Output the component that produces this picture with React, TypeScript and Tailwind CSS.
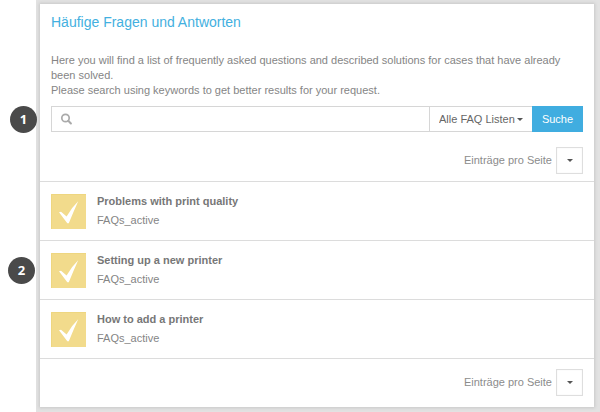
import React from 'react';

interface FaqEntry {
  title: string;
  list: string;
  marker?: string;
}

const entries: FaqEntry[] = [
  { title: 'Problems with print quality', list: 'FAQs_active' },
  { title: 'Setting up a new printer', list: 'FAQs_active', marker: '2' },
  { title: 'How to add a printer', list: 'FAQs_active' },
];

const Caret: React.FC<{ className?: string }> = ({ className }) => (
  <svg viewBox="0 0 6 3" className={`pointer-events-none h-[3px] w-[6px] ${className ?? ''}`} aria-hidden="true">
    <path d="M0 0h6L3 3z" fill="#555" />
  </svg>
);

const Marker: React.FC<{ label: string; className: string }> = ({ label, className }) => (
  <span
    className={`absolute flex size-[27px] items-center justify-center rounded-full bg-[#4a4a4a] font-['Open_Sans',sans-serif] text-[13px] font-bold text-white ${className}`}
  >
    {label}
  </span>
);

const PageSize: React.FC<{ id: string }> = ({ id }) => (
  <div className="flex items-center justify-end gap-1 px-[11px]">
    <label htmlFor={id} className="text-[#8c8c8c]">Einträge pro Seite</label>
    <div className="relative flex items-center justify-center">
      <select id={id} className="size-[27px] appearance-none border border-[#dedede] bg-white text-transparent shadow-[inset_0_0_1px_#ddd]">
        <option value=""></option>
      </select>
      <Caret className="absolute" />
    </div>
  </div>
);

const App: React.FC = () => {
  return (
    <div className="min-h-screen bg-white pl-[36px] font-['Liberation_Sans',Arial,sans-serif] text-[11px] leading-[15px] text-[#858585]">
      <div className="min-h-screen bg-[#e2e2e2] pt-1 pr-[6px] pb-1 pl-1">
        <main className="bg-white pb-[11px] shadow-[0_0_3px_1px_#c8c8c8]">
          <h1 className="px-[11px] pt-[9px] text-[14px] leading-[18px] text-[#43b0e0]">Häufige Fragen und Antworten</h1>

          <p className="px-[11px] pt-[22px]">
            Here you will find a list of frequently asked questions and described solutions for cases that have already
            been solved.
            <br />
            Please search using keywords to get better results for your request.
          </p>

          {/* Search bar */}
          <form className="relative mx-[11px] mt-2 mb-[15px] flex h-[26px]" onSubmit={(e) => e.preventDefault()}>
            <Marker label="1" className="-left-[41px] top-0" />
            <div className="flex min-w-0 flex-1 items-center border border-r-0 border-[#d6d6d6] pl-2">
              <svg viewBox="0 0 12 12" className="size-[12px] shrink-0" fill="none" stroke="#aaa" aria-hidden="true">
                <circle cx="5.5" cy="5" r="3.7" strokeWidth="1.7" />
                <path d="M8.3 7.8l2.6 2.7" strokeWidth="2" strokeLinecap="round" />
              </svg>
              <input type="text" aria-label="Suche" className="h-full min-w-0 flex-1 px-2 outline-none" />
            </div>
            <div className="relative flex items-center">
              <select
                aria-label="FAQ Liste"
                className="h-full w-[103px] appearance-none border border-r-0 border-[#d6d6d6] bg-white pl-[9px] text-[#666]"
              >
                <option>Alle FAQ Listen</option>
              </select>
              <Caret className="absolute right-[9px]" />
            </div>
            <button type="submit" className="w-[51px] bg-[#40ade0] text-white">Suche</button>
          </form>

          <PageSize id="page-size-top" />

          <ul className="mt-[7px] mb-[10px] border-b border-[#dcdcdc]">
            {entries.map((entry) => (
              <li key={entry.title} className="relative flex gap-[11px] border-t border-[#dcdcdc] px-[11px] pt-3 pb-[11px]">
                {entry.marker && <Marker label={entry.marker} className="-left-[32px] top-4" />}
                <svg viewBox="0 0 35 35" className="size-[35px] shrink-0" aria-hidden="true">
                  <path d="M0 0h35v35H0z" fill="#f2db8c" />
                  <path d="M.5 35V.5H35" fill="none" stroke="#eed680" />
                  <path d="M8 18.2L10 17.8L15.6 22.6Q20.5 13.5 27.2 7.2Q22.5 17.5 17.8 29.3H16.3L8 18.2Z" fill="#fff" />
                </svg>
                <div>
                  <h2 className="font-bold text-[#777]">{entry.title}</h2>
                  <p className="mt-1">{entry.list}</p>
                </div>
              </li>
            ))}
          </ul>

          <PageSize id="page-size-bottom" />
        </main>
      </div>
    </div>
  );
};

export default App;
